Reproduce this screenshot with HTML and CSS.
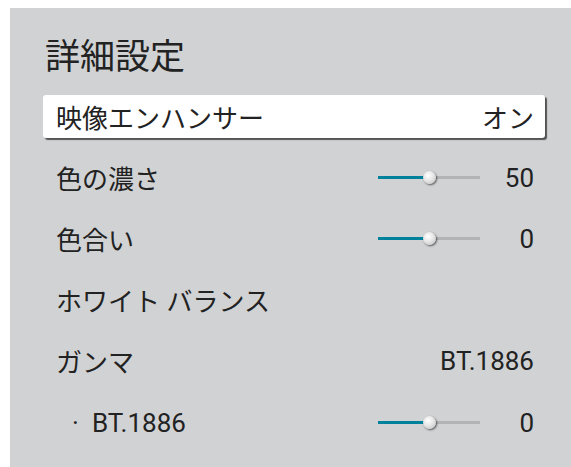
FILE: index.html
```html
<!DOCTYPE html>
<html lang="ja">
<head>
    <meta charset="UTF-8">
    <meta name="viewport" content="width=device-width, initial-scale=1.0">
    <title>詳細設定</title>
    <link rel="stylesheet" href="styles.css">
</head>
<body>
    <div class="panel">
        <h1 class="title">詳細設定</h1>
        <ul class="menu">
            <li class="row selected">
                <span class="label">映像エンハンサー</span>
                <span class="value">オン</span>
            </li>
            <li class="row">
                <span class="label">色の濃さ</span>
                <span class="slider"><span class="fill" style="width: 50%;"></span><span class="thumb" style="left: 50%;"></span></span>
                <span class="value short">50</span>
            </li>
            <li class="row">
                <span class="label">色合い</span>
                <span class="slider"><span class="fill" style="width: 50%;"></span><span class="thumb" style="left: 50%;"></span></span>
                <span class="value short">0</span>
            </li>
            <li class="row">
                <span class="label">ホワイト バランス</span>
            </li>
            <li class="row">
                <span class="label">ガンマ</span>
                <span class="value">BT.1886</span>
            </li>
            <li class="row sub">
                <span class="label"><span class="bullet">·</span>BT.1886</span>
                <span class="slider"><span class="fill" style="width: 50%;"></span><span class="thumb" style="left: 50%;"></span></span>
                <span class="value short">0</span>
            </li>
        </ul>
    </div>
</body>
</html>
```

FILE: styles.css
```css
html, body {
    height: 100%;
    overflow: hidden;
}
body {
    margin: 0;
    padding: 8px 0 0 10px;
    box-sizing: border-box;
    background-color: #ffffff;
    font-family: Roboto, "Noto Sans CJK JP", sans-serif;
    color: #222222;
}
.panel {
    height: 100%;
    box-sizing: border-box;
    background-color: #d1d2d4;
    padding: 29px 26px 0 33px;
}
.title {
    margin: 0 0 16px 2px;
    font-size: 35px;
    font-weight: normal;
    line-height: 42px;
}
.menu {
    list-style: none;
    margin: 0;
    padding: 0;
    display: flex;
    flex-direction: column;
    gap: 18px;
}
.row {
    display: flex;
    align-items: center;
    height: 43px;
    padding: 0 11px 0 13px;
    font-size: 26px;
    border-radius: 3px;
}
.row.selected {
    background-color: #ffffff;
    box-shadow: 2px 2px 1px rgba(40, 40, 40, 0.75);
}
.row.sub {
    margin-top: 1px;
}
.label {
    flex: 1;
    white-space: nowrap;
}
.bullet {
    display: inline-block;
    width: 20px;
    padding-left: 16px;
}
.value {
    text-align: right;
}
.value.short {
    width: 54px;
}
.slider {
    position: relative;
    width: 102px;
    height: 3px;
    background-color: #b2b3b5;
}
.fill {
    display: block;
    height: 100%;
    background-color: #00819b;
}
.thumb {
    position: absolute;
    top: 50%;
    width: 13px;
    height: 13px;
    margin: -7px 0 0 -6px;
    border-radius: 50%;
    background: radial-gradient(circle at 40% 35%, #ffffff 0%, #e6e6e6 45%, #b9b9b9 100%);
    box-shadow: 1px 1px 2px rgba(0, 0, 0, 0.6);
}
```
